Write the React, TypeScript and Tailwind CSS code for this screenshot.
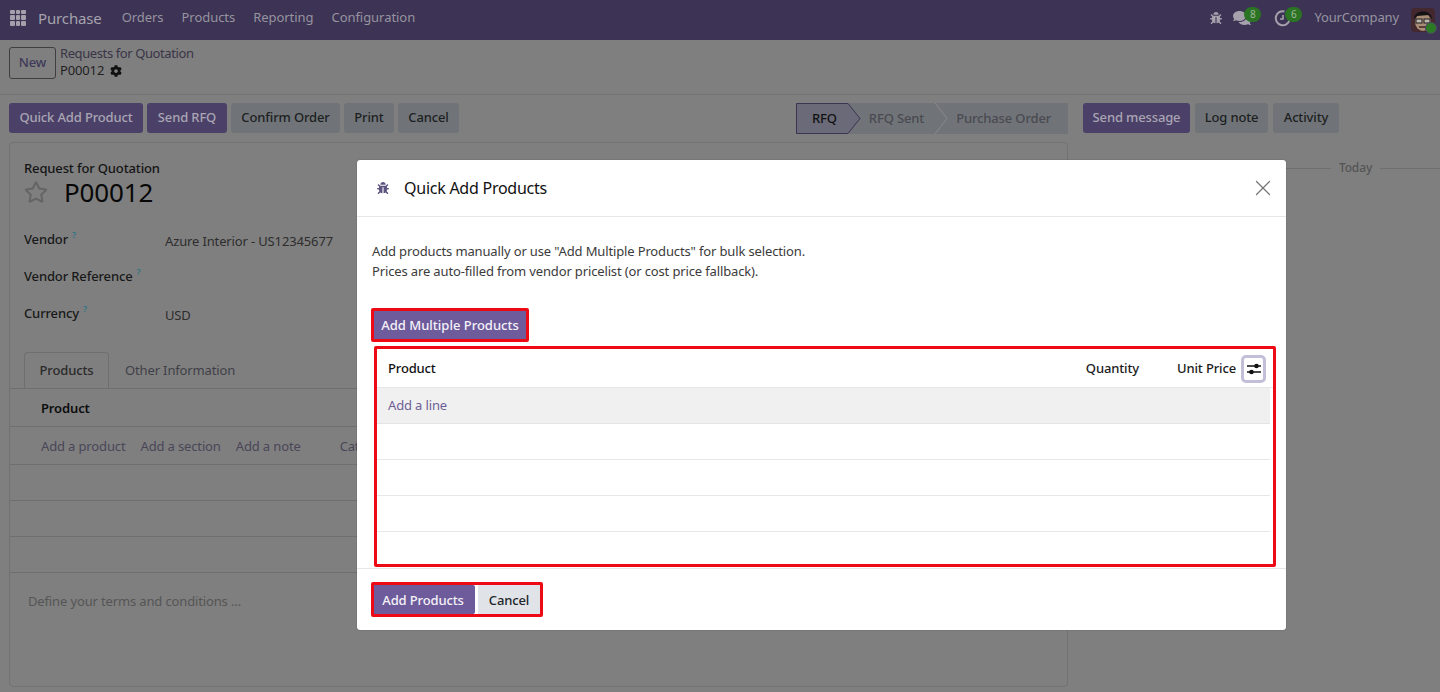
import React from 'react';
import { FaBug, FaCog, FaComments, FaRegStar } from 'react-icons/fa';
import { X } from 'lucide-react';

const navLinks = ['Orders', 'Products', 'Reporting', 'Configuration'];

const AppsIcon = () => (
  <div className="grid grid-cols-3 gap-px w-4 h-4 shrink-0 -mt-px">
    {Array.from({ length: 9 }).map((_, i) => (
      <span key={i} className="bg-[#a3a0ab] rounded-[1px]" />
    ))}
  </div>
);

const ClockIcon = () => (
  <svg width="18" height="18" viewBox="0 0 18 18" fill="none" stroke="#a5a2ad" strokeWidth="2">
    <path d="M15.5 11a7 7 0 1 1-5-8.5" />
    <path d="M9 6v4H6" strokeWidth="1.6" />
  </svg>
);

const Avatar = () => (
  <div className="relative w-6 h-6">
    <svg width="24" height="24" viewBox="0 0 24 24" className="rounded-sm">
      <rect width="24" height="24" fill="#43282f" />
      <ellipse cx="12" cy="14" rx="8" ry="9" fill="#a98d76" />
      <path d="M3 11 C3 1 21 1 21 11 L18 7 L6 8 Z" fill="#141212" />
      <rect x="5" y="11" width="6" height="4" fill="#bdb7ae" stroke="#1c1c1c" strokeWidth="1" />
      <rect x="13" y="11" width="6" height="4" fill="#bdb7ae" stroke="#1c1c1c" strokeWidth="1" />
      <path d="M8 19h8" stroke="#402626" strokeWidth="1.5" />
    </svg>
    <span className="absolute -right-0.5 -bottom-0.5 w-[12px] h-[12px] rounded-full bg-[#2c7a23] border border-[#4d4668]" />
  </div>
);

const Badge = ({ value }: { value: string }) => (
  <span className="absolute -top-[2px] left-[11px] w-[17px] h-[15px] rounded-full bg-[#2a7424] text-[#9fb59c] text-[10px] leading-[15px] text-center">
    {value}
  </span>
);

const SettingsAdjust = () => (
  <svg width="14" height="12" viewBox="0 0 14 12" fill="none" stroke="#111" strokeWidth="1.6">
    <path d="M0 3h14M0 9h14" />
    <circle cx="9.5" cy="3" r="2.3" fill="#111" stroke="none" />
    <circle cx="4.5" cy="9" r="2.3" fill="#111" stroke="none" />
  </svg>
);

const Help = () => <sup className="text-[9px] text-[#2f7488] font-semibold ml-1 -top-1.5">?</sup>;

const BackButton = ({ label, width, primary }: { label: string; width: string; primary?: boolean }) => (
  <button
    className={
      primary
        ? `${width} h-[30px] rounded-[3px] bg-[#4b4068] text-[#a9a5b3] font-medium`
        : `${width} h-[30px] rounded-[3px] bg-[#707479] text-[#1d1f21] font-medium`
    }
  >
    {label}
  </button>
);

const Background = () => (
  <div className="flex flex-col h-full">
    {/* Top nav */}
    <nav className="h-10 shrink-0 bg-[#3c3355] flex items-center pl-[10px] pr-[5px] pb-[4px] text-[#a09da8]">
      <AppsIcon />
      <span className="ml-3 text-[15px] text-[#a5a2ad]">Purchase</span>
      <div className="flex items-center gap-[18px] ml-5 text-[#97939f] tracking-[-0.05px]">
        {navLinks.map((link) => (
          <span key={link}>{link}</span>
        ))}
      </div>
      <div className="ml-auto flex items-center">
        <FaBug className="w-3 h-3 text-[#a5a2ad]" />
        <div className="relative ml-[11px]">
          <FaComments className="w-[18px] h-[18px] text-[#a5a2ad]" />
          <Badge value="8" />
        </div>
        <div className="relative ml-[23px]">
          <ClockIcon />
          <Badge value="6" />
        </div>
        <span className="ml-[22px] text-[#97939f]">YourCompany</span>
        <div className="ml-3 mt-1">
          <Avatar />
        </div>
      </div>
    </nav>

    {/* Control panel */}
    <div className="h-[55px] shrink-0 border-b border-[#727272] flex items-center pl-[9px] gap-1 pb-[12px] pt-[2px]">
      <button className="w-[47px] h-[32px] mt-[2px] border border-[#3f3f3f] rounded-[3px] text-[#40395a] font-medium">New</button>
      <div className="leading-[17px] text-[#2a2a36]">
        <div className="text-[#3a3547] tracking-[-0.4px]">Requests for Quotation</div>
        <div className="flex items-center gap-[6px] text-[#1f1f1f]">
          P00012 <FaCog className="w-3 h-3 text-[#111]" />
        </div>
      </div>
    </div>

    {/* Action buttons */}
    <div className="h-[47px] shrink-0 flex items-start pt-2 pl-[9px]">
      <div className="flex gap-[4px]">
        <BackButton label="Quick Add Product" width="w-[134px]" primary />
        <BackButton label="Send RFQ" width="w-[80px]" primary />
        <BackButton label="Confirm Order" width="w-[109px]" />
        <BackButton label="Print" width="w-[50px]" />
        <BackButton label="Cancel" width="w-[61px]" />
      </div>
      <div className="ml-[337px] w-[272px] h-[31px] flex bg-[#707479] text-[#4a4a50] font-medium items-center relative">
        <svg width="272" height="31" viewBox="0 0 272 31" className="absolute inset-0" fill="none">
          <path d="M0.5 0.5H52L64 15.5L52 30.5H0.5Z" fill="#6a6a78" stroke="#3c3355" />
          <path d="M139 0L151 15.5L139 31" stroke="#8a8a8a" />
        </svg>
        <span className="relative ml-[16px] text-[#111]">RFQ</span>
        <span className="relative ml-[32px]">RFQ Sent</span>
        <span className="relative ml-[32px]">Purchase Order</span>
      </div>
      <div className="ml-[15px] flex gap-[5px]">
        <BackButton label="Send message" width="w-[107px]" primary />
        <BackButton label="Log note" width="w-[73px]" />
        <BackButton label="Activity" width="w-[66px]" />
      </div>
    </div>

    {/* Body */}
    <div className="flex-1 flex pl-[9px] min-h-0 pb-[5px]">
      <div className="w-[1059px] border border-[#727272] rounded-sm flex flex-col pt-[16px]">
        <div className="pl-[14px] text-[#141414] font-medium leading-[18px]">Request for Quotation</div>
        <div className="pl-[14px] flex items-center h-[31px] -mt-px">
          <FaRegStar className="w-6 h-6 text-[#656565]" />
          <span className="ml-[16px] text-[26px] text-[#080808] leading-none">P00012</span>
        </div>
        <div className="pl-[14px] mt-[23px] flex flex-col gap-[19px] text-[#191919]">
          <div className="flex items-start h-[18px]">
            <span className="w-[141px] font-medium">Vendor<Help /></span>
            <span className="text-[#2d2d2d] mt-[2px]">Azure Interior - US12345677</span>
          </div>
          <div className="flex items-start h-[18px]">
            <span className="font-medium">Vendor Reference<Help /></span>
          </div>
          <div className="flex items-start h-[18px]">
            <span className="w-[141px] font-medium">Currency<Help /></span>
            <span className="text-[#2d2d2d] mt-[2px]">USD</span>
          </div>
        </div>
        <div className="mt-[30px] h-[37px] border-b border-[#6f6f6f] flex pl-[14px] shrink-0">
          <div className="w-[85px] h-[37px] border border-b-0 border-[#6f6f6f] rounded-t-sm flex items-center justify-center text-[#2a2a2a] font-medium">
            Products
          </div>
          <div className="ml-[16px] pt-px flex items-center text-[#3f3f48]">Other Information</div>
        </div>
        <div className="h-[38px] border-b border-[#6f6f6f] pl-[31px] pt-[2px] flex items-center font-semibold text-[#0d0d0d] shrink-0">Product</div>
        <div className="h-[38px] border-b border-[#6f6f6f] pl-[31px] pt-[2px] flex items-center gap-[15px] text-[#4a4658] shrink-0">
          <span>Add a product</span>
          <span>Add a section</span>
          <span>Add a note</span>
          <span className="ml-[24px]">Catalog</span>
        </div>
        <div className="h-[36px] border-b border-[#6f6f6f] shrink-0" />
        <div className="h-[36px] border-b border-[#6f6f6f] shrink-0" />
        <div className="h-[36px] border-b border-[#6f6f6f] shrink-0" />
        <div className="pl-[18px] mt-[19px] text-[#555]">Define your terms and conditions ...</div>
      </div>
      <div className="flex-1 flex items-start pt-[17px] pl-[203px]">
        <div className="flex items-center w-full gap-2 text-[#555] text-[12px] font-medium">
          <span className="flex-1 h-px bg-[#6f6f6f]" />
          <span>Today</span>
          <span className="flex-1 h-px bg-[#6f6f6f]" />
        </div>
      </div>
    </div>
  </div>
);

const QuickAddModal = () => (
  <div className="absolute inset-0 flex items-start justify-start pl-[357px] pt-[160px]">
    <div className="w-[929px] h-[470px] bg-white rounded-[3px] flex flex-col shadow-[0_0_1px_#333]">
      {/* Header */}
      <div className="h-[57px] shrink-0 border-b border-[#e7e7e7] flex items-center pl-[20px] pr-[10px] pb-[1px]">
        <FaBug className="w-3 h-3 text-[#5d5480]" />
        <span className="ml-[15px] text-[16px] tracking-[-0.25px] text-[#111] font-normal">Quick Add Products</span>
        <X className="ml-auto w-[26px] h-[26px] text-[#777]" strokeWidth={1.2} />
      </div>

      {/* Body */}
      <div className="flex-1 flex flex-col pl-[15px] pt-[25px]">
        <p className="text-[#3b3b3b] leading-[19.5px]">
          Add products manually or use "Add Multiple Products" for bulk selection.
          <br />
          Prices are auto-filled from vendor pricelist (or cost price fallback).
        </p>
        <div className="mt-[27px] w-[158px] h-[34px] -ml-px border-[3px] border-[#ee0a14] rounded-[2px]">
          <button className="w-full h-full pt-px bg-[#6e5b9b] text-[#f4f2f8] font-medium tracking-normal">Add Multiple Products</button>
        </div>
        <div className="mt-[4px] ml-[2px] w-[902px] h-[221px] border-[3px] border-[#ee0a14] rounded-[2px] flex flex-col overflow-hidden">
          <div className="h-[39px] shrink-0 border-b border-[#e7e7e7] pt-px flex items-center pl-[11px] font-medium text-[#1c1c1c]">
            <span className="text-[#111]">Product</span>
            <span className="ml-auto">Quantity</span>
            <span className="ml-[38px]">Unit Price</span>
            <div className="ml-[5px] mr-[7px] w-[25px] h-[28px] rounded-[5px] border-[3px] border-[#c3bfd9] flex items-center justify-center">
              <SettingsAdjust />
            </div>
          </div>
          <div className="h-[36px] shrink-0 mr-[3px] bg-[#f0f0f0] border-b border-[#e4e4e4] flex items-center pl-[11px] text-[#6e5f96]">Add a line</div>
          <div className="h-[36px] shrink-0 mr-[3px] border-b border-[#e7e7e7]" />
          <div className="h-[36px] shrink-0 mr-[3px] border-b border-[#e7e7e7]" />
          <div className="h-[36px] shrink-0 mr-[3px] border-b border-[#e7e7e7]" />
        </div>
      </div>

      {/* Footer */}
      <div className="h-[62px] shrink-0 border-t border-[#e7e7e7] pl-[14px] pt-[13px]">
        <div className="w-[172px] h-[35px] border-[3px] border-[#ee0a14] rounded-[2px] flex">
          <button className="w-[101px] pt-[2px] pr-[3px] bg-[#6e5b9b] text-[#f4f2f8] font-medium rounded-r-[2px]">Add Products</button>
          <button className="ml-[3px] pt-[2px] flex-1 bg-[#e0e3e7] text-[#22262a] font-medium">Cancel</button>
        </div>
      </div>
    </div>
  </div>
);

const App = () => (
  <div className="relative w-[1440px] h-[692px] overflow-hidden bg-[#7f7f7f] text-[13px] tracking-[-0.14px] font-['Noto_Sans',sans-serif]">
    <Background />
    <QuickAddModal />
  </div>
);

export default App;
